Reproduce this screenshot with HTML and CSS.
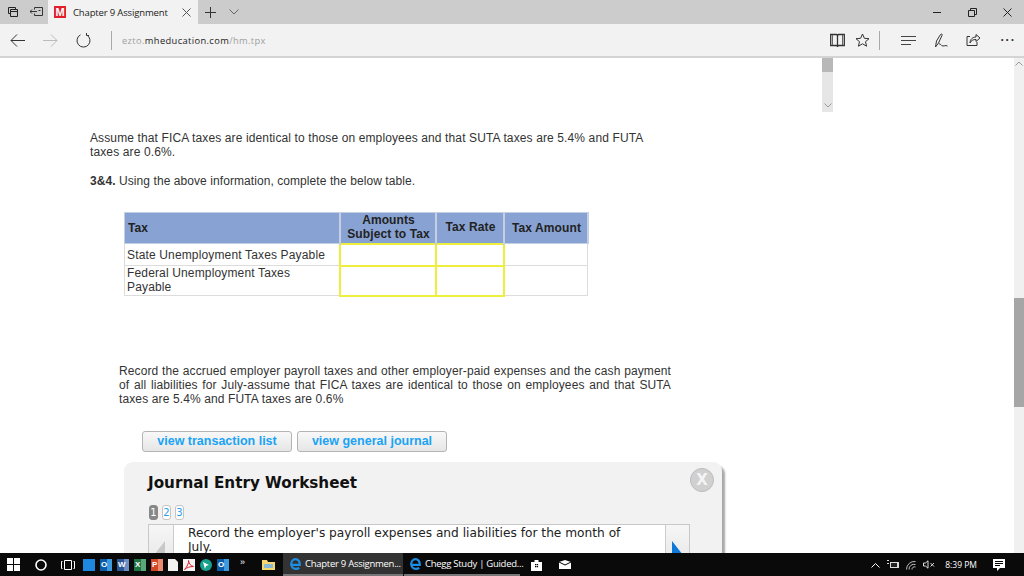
FILE: index.html
```html
<!DOCTYPE html>
<html lang="en">
<head>
<meta charset="utf-8">
<title>Chapter 9 Assignment</title>
<link rel="stylesheet" href="styles.css">
</head>
<body>
<div class="browser">
  <header class="tabbar">
    <div class="tab-tools">
      <svg class="ico" width="12" height="12" viewBox="0 0 12 12"><path d="M1.500 1.500h7v2M1.500 1.500v6h2M3.500 3.500h7v7h-7zM3.500 5.500h7" fill="none" stroke="#222"/></svg>
      <svg class="ico" width="13" height="12" viewBox="0 0 13 12"><path d="M4.500 3.500v-2h8v8h-8v-2M0 5.500h7M2 3.500l-2 2 2 2M8.500 4.500h2" fill="none" stroke="#333"/></svg>
    </div>
    <div class="tab">
      <span class="favicon">M</span>
      <span class="tab-title">Chapter 9 Assignment</span>
      <svg class="tab-close" width="9" height="9" viewBox="0 0 9 9"><path d="M.5.5l8 8M8.500.5l-8 8" stroke="#555" fill="none"/></svg>
    </div>
    <svg class="tab-plus" width="11" height="11" viewBox="0 0 11 11"><path d="M5.500 0v11M0 5.500h11" stroke="#333" fill="none"/></svg>
    <svg class="tab-down" width="10" height="6" viewBox="0 0 10 6"><path d="M.5.5L5 5 9.500.5" stroke="#666" fill="none"/></svg>
    <div class="win-controls">
      <svg width="9" height="9" viewBox="0 0 9 9"><path d="M0 4.500h8" stroke="#222" fill="none"/></svg>
      <svg width="9" height="9" viewBox="0 0 9 9"><path d="M.5 2.500h6v6h-6zM2.500 2.500v-2h6v6h-2" stroke="#222" fill="none"/></svg>
      <svg width="9" height="9" viewBox="0 0 9 9"><path d="M.5.5l8 8M8.500.5l-8 8" stroke="#222" fill="none"/></svg>
    </div>
  </header>
  <nav class="toolbar">
    <svg class="nav-back" width="15" height="13" viewBox="0 0 15 13"><path d="M15 6.500H1M7 .5l-6 6 6 6" stroke="#333" fill="none"/></svg>
    <svg class="nav-fwd" width="15" height="13" viewBox="0 0 15 13"><path d="M0 6.500h14M8 .5l6 6-6 6" stroke="#bbb" fill="none"/></svg>
    <svg class="nav-reload" width="15" height="15" viewBox="0 0 15 15"><path d="M4.500 1.800a6.500 6.500 0 1 0 6 0M10.500 0v2.500H13" stroke="#333" fill="none"/></svg>
    <span class="vsep"></span>
    <span class="url">ezto.<b>mheducation.com</b>/hm.tpx</span>
    <div class="tools">
      <svg class="tool-book" width="15" height="14" viewBox="0 0 15 14"><path d="M.7 1.500h5.800l1 1 1-1h5.800v11H8.500l-1 1-1-1H.7zM7.500 2.500v10.500" fill="none" stroke="#333" stroke-width="1.300"/><path d="M2.500 2v10M12.500 2v10" stroke="#666"/></svg>
      <svg class="tool-star" width="15" height="14" viewBox="0 0 15 14"><path d="M7.500 1l1.900 4.300 4.600.4-3.500 3 1.100 4.500-4.100-2.400-4.100 2.400 1.100-4.500-3.500-3 4.600-.4z" fill="none" stroke="#333"/></svg>
      <span class="vsep"></span>
      <svg class="tool-hub" width="15" height="9" viewBox="0 0 15 9"><path d="M0 .5h15M0 4.500h15M0 8.500h10" stroke="#444" fill="none"/></svg>
      <svg class="tool-pen" width="14" height="15" viewBox="0 0 14 15"><path d="M1.500 14L2.500 8 6.500 1.500C7.500.5 8.500 1 8 2.500L4.500 10 1.500 14M5 11c1.500-1 2 2 4 2s2-1 4.500 0" stroke="#333" fill="none"/></svg>
      <svg class="tool-share" width="15" height="14" viewBox="0 0 15 14"><path d="M4 3.500H1v9h10V9M4 10c0-4 3-6 6-6V1.500l4 3.500-4 3.500V6.500c-3 0-5 1-6 3.500z" stroke="#333" fill="none"/></svg>
      <span class="tool-more">···</span>
    </div>
  </nav>
  <main class="page">
    <div class="page-flow">
      <section class="intro">
        <p class="intro-text">Assume that FICA taxes are identical to those on employees and that SUTA taxes are 5.4% and FUTA taxes are 0.6%.</p>
        <p class="intro-q"><b>3&amp;4.</b> Using the above information, complete the below table.</p>
      </section>
      <table class="tax-table">
        <colgroup><col class="c1"><col class="c2"><col class="c3"><col class="c4"></colgroup>
        <thead>
          <tr><th class="left">Tax</th><th>Amounts<br>Subject to Tax</th><th>Tax Rate</th><th>Tax Amount</th></tr>
        </thead>
        <tbody>
          <tr class="r1"><td>State Unemployment Taxes Payable</td><td class="input"></td><td class="input"></td><td></td></tr>
          <tr class="r2"><td>Federal Unemployment Taxes<br>Payable</td><td class="input"></td><td class="input"></td><td></td></tr>
        </tbody>
      </table>
      <p class="record">Record the accrued employer payroll taxes and other employer-paid expenses and the cash payment of all liabilities for July-assume that FICA taxes are identical to those on employees and that SUTA taxes are 5.4% and FUTA taxes are 0.6%</p>
      <div class="btn-row">
        <button class="btn">view transaction list</button>
        <button class="btn">view general journal</button>
      </div>
      <section class="panel">
        <span class="panel-close">X</span>
        <h2 class="panel-title">Journal Entry Worksheet</h2>
        <div class="pager"><span class="pg on">1</span><span class="pg">2</span><span class="pg">3</span></div>
        <div class="instr">
          <div class="instr-prev"><span class="arrow-l"></span></div>
          <div class="instr-text">Record the employer's payroll expenses and liabilities for the month of July.</div>
          <div class="instr-next"><span class="arrow-r"></span></div>
        </div>
      </section>
    </div>
    <div class="inner-scroll"><span class="inner-thumb"></span><svg class="inner-down" width="8" height="5" viewBox="0 0 8 5"><path d="M.5.5L4 4 7.500.5" stroke="#999" fill="none"/></svg></div>
    <div class="page-scroll"><svg class="page-up" width="8" height="5" viewBox="0 0 8 5"><path d="M.5 4.500L4 1l3.500 3.500" stroke="#999" fill="none"/></svg><span class="page-thumb"></span></div>
  </main>
  <footer class="taskbar">
    <svg class="t-win" width="13" height="13" viewBox="0 0 13 13"><path d="M0 0h6v6H0zM7 0h6v6H7zM0 7h6v6H0zM7 7h6v6H7z" fill="#fff"/></svg>
    <svg class="t-cortana" width="12" height="12" viewBox="0 0 12 12"><circle cx="6" cy="6" r="5" fill="none" stroke="#fff" stroke-width="1.600"/></svg>
    <svg class="t-view" width="16" height="10" viewBox="0 0 16 10"><path d="M4.500.5h7v9h-7zM2.500 1.500h-1v7h1M13.500 1.500h1v7h-1" fill="none" stroke="#fff"/></svg>
    <div class="t-apps">
      <span class="app blue"></span>
      <span class="app outlook">O</span>
      <span class="app word">W</span>
      <span class="app excel">X</span>
      <span class="app ppt">P</span>
      <svg class="app-svg" width="10" height="12" viewBox="0 0 10 12"><path d="M0 0h7l3 3v9H0z" fill="#f2f2f2"/></svg>
      <svg class="app-svg" width="12" height="12" viewBox="0 0 12 12"><path d="M0 0h12v12H0z" fill="#f4f4f4"/><path d="M1.500 10.500C4 8 6 4 5.500 1.500 6 5 8 7 10.500 7.500 7 7.500 4 8.500 1.500 10.500z" fill="none" stroke="#d8232a"/></svg>
      <svg class="app-svg" width="12" height="12" viewBox="0 0 12 12"><circle cx="6" cy="6" r="6" fill="#17a08c"/><path d="M3 3l6 3-3 1-1 3z" fill="#fff"/></svg>
      <span class="app outlook">O</span>
      <span class="more">»</span>
      <svg class="folder" width="13" height="11" viewBox="0 0 13 11"><path d="M0 1h5l1 2h7v8H0z" fill="#f5d76e"/><path d="M2 5h9v4H2z" fill="#8ab8d8"/></svg>
    </div>
    <div class="t-task active"><svg class="edge" width="11" height="12" viewBox="0 0 11 12"><path d="M1.200 6.800h8.600C10 3.500 8 1.200 5.500 1.200 3 1.200 1.200 3.500 1.200 6.300c0 2.700 2 4.500 4.500 4.500 1.500 0 2.700-.4 3.600-1" fill="none" stroke="#1b8ee6" stroke-width="2.200"/></svg><span>Chapter 9 Assignmen...</span></div>
    <div class="t-task second"><svg class="edge" width="11" height="12" viewBox="0 0 11 12"><path d="M1.200 6.800h8.600C10 3.500 8 1.200 5.500 1.200 3 1.200 1.200 3.500 1.200 6.300c0 2.700 2 4.500 4.500 4.500 1.500 0 2.700-.4 3.600-1" fill="none" stroke="#1b8ee6" stroke-width="2.200"/></svg><span>Chegg Study | Guided...</span></div>
    <svg class="t-store" width="11" height="12" viewBox="0 0 11 12"><path d="M0 3h11v9H0zM3.500 3V1h4v2" fill="#fff"/><path d="M4 5h1.300v1.300H4zM5.800 5h1.300v1.300H5.800zM4 7h1.300v1.300H4zM5.800 7h1.300v1.300H5.800z" fill="#000"/></svg>
    <svg class="t-mail" width="12" height="9" viewBox="0 0 12 9"><path d="M0 2l6-2 6 2v7H0z" fill="#fff"/><path d="M0 2l6 3 6-3" stroke="#000" fill="none"/></svg>
    <div class="t-tray">
      <svg width="9" height="6" viewBox="0 0 9 6"><path d="M.5 5.500l4-4 4 4" stroke="#fff" fill="none"/></svg>
      <svg width="12" height="9" viewBox="0 0 12 9"><path d="M3 2h9v6H3zM0 0h2v1H0zM0 3h2v1H0z" fill="#ddd"/><path d="M4 3h6v4H4z" fill="#222"/></svg>
      <svg width="10" height="10" viewBox="0 0 10 10"><path d="M.5 9.500a8 8 0 0 1 9-8M3 9.500a5 5 0 0 1 6.500-5M6 9.500a2.500 2.500 0 0 1 3.500-2.500" stroke="#bbb" fill="none"/></svg>
      <svg width="12" height="9" viewBox="0 0 12 9"><path d="M.5 3h2L5 .8v7.400L2.500 6h-2zM7.500 3l3.500 3.500M11 3L7.500 6.500" stroke="#ddd" fill="none"/></svg>
      <span class="clock">8:39 PM</span>
    </div>
    <svg class="t-notify" width="12" height="12" viewBox="0 0 12 12"><path d="M0 0h12v9H7l-3 3V9H0z" fill="#fff"/><path d="M2 2.500h8M2 4.500h8M2 6.500h5" stroke="#000"/></svg>
  </footer>
</div>
</body>
</html>
```
FILE: styles.css
```css
* { box-sizing: border-box; }
html, body { margin: 0; height: 100%; overflow: hidden; }
body { font-family: "Liberation Sans", Arial, sans-serif; background: #fff; }
svg { display: block; flex: none; }

.browser { width: 1024px; height: 576px; display: flex; flex-direction: column; overflow: hidden; }

/* Tab strip */
.tabbar { height: 24px; flex: none; background: #cccccc; display: flex; align-items: center; }
.tab-tools { width: 48px; flex: none; display: flex; align-items: center; gap: 11px; padding-left: 7px; }
.tab { width: 150px; flex: none; height: 24px; background: #f2f2f2; display: flex; align-items: center; padding-left: 6px; }
.favicon { width: 12px; height: 12px; background: #e2202c; color: #fff; font: bold 11px/12px "Liberation Sans", sans-serif; text-align: center; }
.tab-title { font: 9.500px "Open Sans", sans-serif; letter-spacing: -.15px; color: #222; margin-left: 7px; width: 108px; white-space: nowrap; }
.tab-close { margin-left: 1px; }
.tab-plus { margin-left: 7px; }
.tab-down { margin-left: 13px; }
.win-controls { margin-left: auto; display: flex; align-items: center; gap: 26px; padding-right: 12px; }

/* Address bar */
.toolbar { height: 34px; flex: none; background: #f2f2f2; border-bottom: 2px solid #d4d4d4; display: flex; align-items: center; padding-left: 10px; }
.nav-fwd { margin-left: 18px; }
.nav-reload { margin-left: 18px; }
.vsep { width: 1px; height: 19px; background: #a8a8a8; flex: none; }
.toolbar > .vsep { margin-left: 20px; }
.url { font: 9.300px "Open Sans", sans-serif; letter-spacing: .38px; color: #a0a0a0; margin-left: 10px; white-space: nowrap; }
.url b { font-weight: 400; color: #222; }
.tools { margin-left: auto; display: flex; align-items: center; padding-right: 8px; }
.tool-star { margin-left: 10px; }
.tools .vsep { margin-left: 9px; }
.tool-hub { margin-left: 21px; }
.tool-pen { margin-left: 18px; }
.tool-share { margin-left: 18px; }
.tool-more { font: bold 12px "Liberation Sans", sans-serif; color: #333; margin-left: 19px; letter-spacing: 1.200px; line-height: 10px; }

/* Page */
.page { flex: 1; min-height: 0; position: relative; overflow: hidden; background: #fff; color: #333; font-size: 12px; }
.page-flow { padding-top: 73px; }
.intro { padding-left: 90px; width: 660px; }
.intro-text { margin: 0; line-height: 14px; letter-spacing: .01em; }
.intro-q { margin: 15px 0 0; line-height: 14px; letter-spacing: .006em; }

.tax-table { margin: 24px 0 0 124px; width: 463px; border-collapse: collapse; table-layout: fixed; font-size: 12px; line-height: 14px; color: #333; }
.c1 { width: 215px; } .c2 { width: 96px; } .c3 { width: 68px; } .c4 { width: 84px; }
.tax-table th { background: #88a3d3; border: 1px solid #c4cfe2; border-width: 1px 2px 1px 1px; font-weight: 700; color: #222; text-align: center; height: 31px; padding: 0 0 1px 2px; letter-spacing: .008em; }
.tax-table th.left { text-align: left; padding-left: 3px; }
.tax-table td { border: 1px solid #dcdcdc; padding: 0 2px; letter-spacing: .0125em; }
.tax-table td.input { border: 2px solid #eeee3c; }
.r1 td { height: 22px; }
.r2 td { height: 29px; padding-bottom: 1px; }

.record { margin: 67px 0 0 119px; width: 552px; line-height: 14px; text-align: justify; letter-spacing: .01em; }

.btn-row { display: flex; gap: 5px; margin: 25px 0 0 142px; }
.btn { width: 150px; height: 21px; border: 1px solid #b4b4b4; border-radius: 3px; background: linear-gradient(#f8f8f8, #e6e6e6); color: #1aa3f5; font: bold 12.500px "Liberation Sans", sans-serif; padding: 0; }

.panel { position: relative; width: 598px; height: 200px; margin: 10px 0 0 124px; background: #f2f2f2; border-radius: 9px; box-shadow: 4px 3px 2px -1px #a8a8a8; padding: 12px 24px 0; }
.panel-close { position: absolute; right: 8px; top: 6px; width: 24px; height: 24px; border-radius: 50%; background: #d0d0d0; border: 1px solid #bcbcbc; color: #f4f4f4; font: 700 15px/22px "DejaVu Sans", sans-serif; text-align: center; }
.panel-title { margin: 0; font: 700 15.200px/18px "DejaVu Sans", Verdana, sans-serif; color: #111; }
.pager { display: flex; gap: 4px; margin-top: 13px; height: 15px; padding-left: 1px; }
.pg { width: 9px; height: 15px; border: 1px solid #c4c4c4; border-radius: 3px; background: #fff; color: #2b9df0; font: 10px/13px "DejaVu Sans", sans-serif; text-align: center; }
.pg.on { background: #888; border-color: #888; color: #fff; }
.instr { display: flex; width: 542px; height: 60px; margin-top: 4px; border: 1px solid #c8c8c8; background: #fff; }
.instr-prev, .instr-next { flex: none; background: linear-gradient(#f6f6f6, #e0e0e0); position: relative; }
.instr-prev { width: 25px; border-right: 1px solid #ccc; }
.instr-next { width: 24px; border-left: 1px solid #ccc; }
.arrow-l { position: absolute; left: 5px; top: 16px; border: 11px solid transparent; border-left: 0; border-right: 11px solid #c8c8c8; border-top-width: 14px; border-bottom-width: 14px; }
.arrow-r { position: absolute; left: 6px; top: 16px; border: 11px solid transparent; border-right: 0; border-left: 11px solid #0f78d8; border-top-width: 14px; border-bottom-width: 14px; }
.instr-text { flex: 1; padding: 1px 32px 1px 14px; font: 12.200px/14px "DejaVu Sans", Verdana, sans-serif; color: #222; }

.inner-scroll { position: absolute; left: 822px; top: 0; width: 11px; height: 54px; background: #e6e6e6; }
.inner-thumb { display: block; height: 14px; background: #b8b8b8; }
.inner-down { position: absolute; left: 2px; bottom: 4px; }
.page-scroll { position: absolute; right: 0; top: 0; width: 10px; height: 100%; background: #f0f0f0; }
.page-up { position: absolute; left: 1px; top: 3px; }
.page-thumb { position: absolute; left: 0; top: 240px; width: 10px; height: 109px; background: #a6a6a6; }

/* Taskbar */
.taskbar { height: 23px; flex: none; background: #0a0a0a; display: flex; align-items: center; color: #fff; position: relative; z-index: 2; }
.t-win { margin-left: 7px; }
.t-cortana { margin-left: 15px; }
.t-view { margin-left: 13px; }
.t-apps { display: flex; align-items: center; margin-left: 7px; gap: 5px; width: 200px; flex: none; }
.app { width: 12px; height: 12px; font: bold 8px/12px "Liberation Sans", sans-serif; color: #fff; flex: none; padding-left: 1px; }
.blue { background: #1e88e0; }
.outlook { background: linear-gradient(to right, #0a5ca8 60%, #3c9be0 60%); }
.word { background: linear-gradient(to right, #2b5797 60%, #6c8ec4 60%); }
.excel { background: linear-gradient(to right, #1f7244 60%, #58a878 60%); }
.ppt { background: linear-gradient(to right, #d24726 60%, #ea8a70 60%); }
.more { font: 9px "Liberation Sans", sans-serif; margin: -6px 0 0 6px; }
.folder { margin-left: 12px; }
.t-task { display: flex; align-items: center; gap: 4px; height: 23px; width: 120px; flex: none; padding-left: 7px; font: 9.500px "Open Sans", sans-serif; white-space: nowrap; letter-spacing: -.27px; border-bottom: 2px solid #777; }
.t-task.active { background: #333; }
.t-task.second { width: 116px; margin-left: 1px; padding-left: 6px; }
.t-store { margin-left: 11px; }
.t-mail { margin-left: 17px; }
.t-tray { display: flex; align-items: center; gap: 7px; margin-left: auto; font: 8.500px "Open Sans", sans-serif; }
.clock { margin-left: 3px; white-space: nowrap; }
.t-notify { margin: 0 19px 0 16px; }
```
